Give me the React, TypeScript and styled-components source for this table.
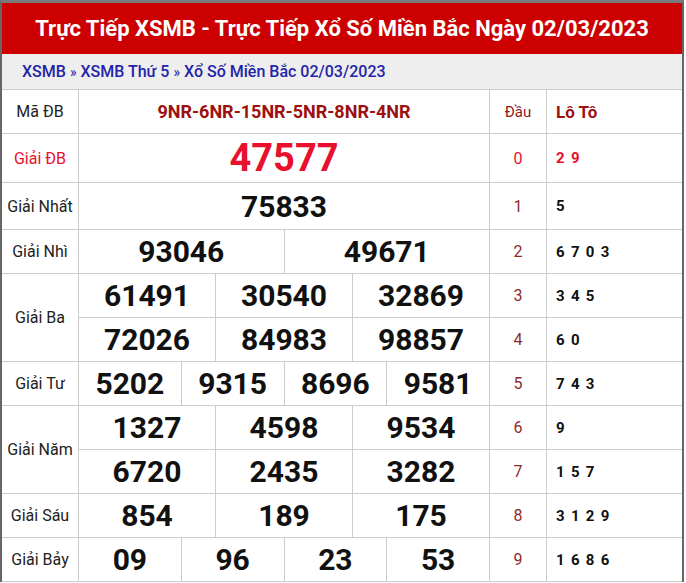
import React from "react";
import styled, { createGlobalStyle } from "styled-components";

const Global = createGlobalStyle`
  html, body { margin: 0; padding: 0; background: #fff; }
  body { font-family: Roboto, "Liberation Sans", Arial, sans-serif; }
`;

const Wrapper = styled.div`
  width: 684px;
  box-sizing: border-box;
  border-left: 2px solid #666;
  border-right: 2px solid #666;
  border-top: 3px solid #7a7a7a;
`;

const Title = styled.h1`
  margin: 0;
  height: 51px;
  background: #cc0000;
  color: #fff;
  font-size: 22px;
  font-weight: 700;
  display: flex;
  align-items: center;
  justify-content: center;
`;

const Crumbs = styled.div`
  height: 35px;
  background: #eeeeee;
  display: flex;
  align-items: center;
  gap: 4px;
  padding-left: 20px;
  font-size: 16px;
  font-weight: 500;
  color: #2424a8;
`;

const Sep = styled.span`
  font-size: 14px;
  font-weight: 400;
`;

const Grid = styled.div`
  display: grid;
  grid-template-columns: 76px repeat(12, 1fr) 56px 135px;
  grid-template-rows: 43px 48px 46px repeat(8, 43px);
  gap: 1px;
  padding: 1px 0;
  background: #cccccc;
`;

const Cell = styled.div<{ $span?: number; $rows?: number }>`
  background: #fff;
  display: flex;
  align-items: center;
  justify-content: center;
  grid-column: span ${(p) => p.$span ?? 1};
  grid-row: span ${(p) => p.$rows ?? 1};
`;

const Label = styled(Cell)<{ $red?: boolean }>`
  font-size: 16px;
  color: ${(p) => (p.$red ? "#e8112d" : "#222")};
`;

const Code = styled(Cell)`
  font-size: 18px;
  font-weight: 700;
  color: #9c1010;
`;

const Num = styled(Cell)<{ $big?: boolean }>`
  font-size: ${(p) => (p.$big ? "38px" : "30px")};
  font-weight: 700;
  color: ${(p) => (p.$big ? "#e8112d" : "#111")};
`;

const Head = styled(Cell)`
  font-size: 15px;
  color: #8b1a1a;
`;

const HeadLoto = styled(Cell)`
  justify-content: flex-start;
  padding-left: 9px;
  font-size: 17px;
  font-weight: 700;
  color: #9c1010;
`;

const Dau = styled(Cell)<{ $red?: boolean }>`
  font-size: 16px;
  color: ${(p) => (p.$red ? "#e8112d" : "#8b2c2c")};
`;

const Loto = styled(Cell)<{ $red?: boolean }>`
  justify-content: flex-start;
  padding-left: 9px;
  font-size: 15px;
  font-weight: 700;
  letter-spacing: 1.3px;
  color: ${(p) => (p.$red ? "#e8112d" : "#111")};
`;

const loto = ["2 9", "5", "6 7 0 3", "3 4 5", "6 0", "7 4 3", "9", "1 5 7", "3 1 2 9", "1 6 8 6"];

type Row = { label?: string; rows?: number; nums: string[] };

const rows: Row[] = [
  { label: "Giải Nhì", nums: ["93046", "49671"] },
  { label: "Giải Ba", rows: 2, nums: ["61491", "30540", "32869"] },
  { nums: ["72026", "84983", "98857"] },
  { label: "Giải Tư", nums: ["5202", "9315", "8696", "9581"] },
  { label: "Giải Năm", rows: 2, nums: ["1327", "4598", "9534"] },
  { nums: ["6720", "2435", "3282"] },
  { label: "Giải Sáu", nums: ["854", "189", "175"] },
  { label: "Giải Bảy", nums: ["09", "96", "23", "53"] },
];

export default function App() {
  return (
    <>
      <Global />
      <Wrapper>
        <Title>Trực Tiếp XSMB - Trực Tiếp Xổ Số Miền Bắc Ngày 02/03/2023</Title>
        <Crumbs>
          <span>XSMB</span>
          <Sep>»</Sep>
          <span>XSMB Thứ 5</span>
          <Sep>»</Sep>
          <span>Xổ Số Miền Bắc 02/03/2023</span>
        </Crumbs>
        <Grid>
          <Label>Mã ĐB</Label>
          <Code $span={12}>9NR-6NR-15NR-5NR-8NR-4NR</Code>
          <Head>Đầu</Head>
          <HeadLoto>Lô Tô</HeadLoto>

          <Label $red>Giải ĐB</Label>
          <Num $span={12} $big>47577</Num>
          <Dau $red>0</Dau>
          <Loto $red>{loto[0]}</Loto>

          <Label>Giải Nhất</Label>
          <Num $span={12}>75833</Num>
          <Dau>1</Dau>
          <Loto>{loto[1]}</Loto>

          {rows.map((r, i) => (
            <React.Fragment key={i}>
              {r.label && <Label $rows={r.rows}>{r.label}</Label>}
              {r.nums.map((n, j) => (
                <Num key={j} $span={12 / r.nums.length}>{n}</Num>
              ))}
              <Dau>{i + 2}</Dau>
              <Loto>{loto[i + 2]}</Loto>
            </React.Fragment>
          ))}
        </Grid>
      </Wrapper>
    </>
  );
}
